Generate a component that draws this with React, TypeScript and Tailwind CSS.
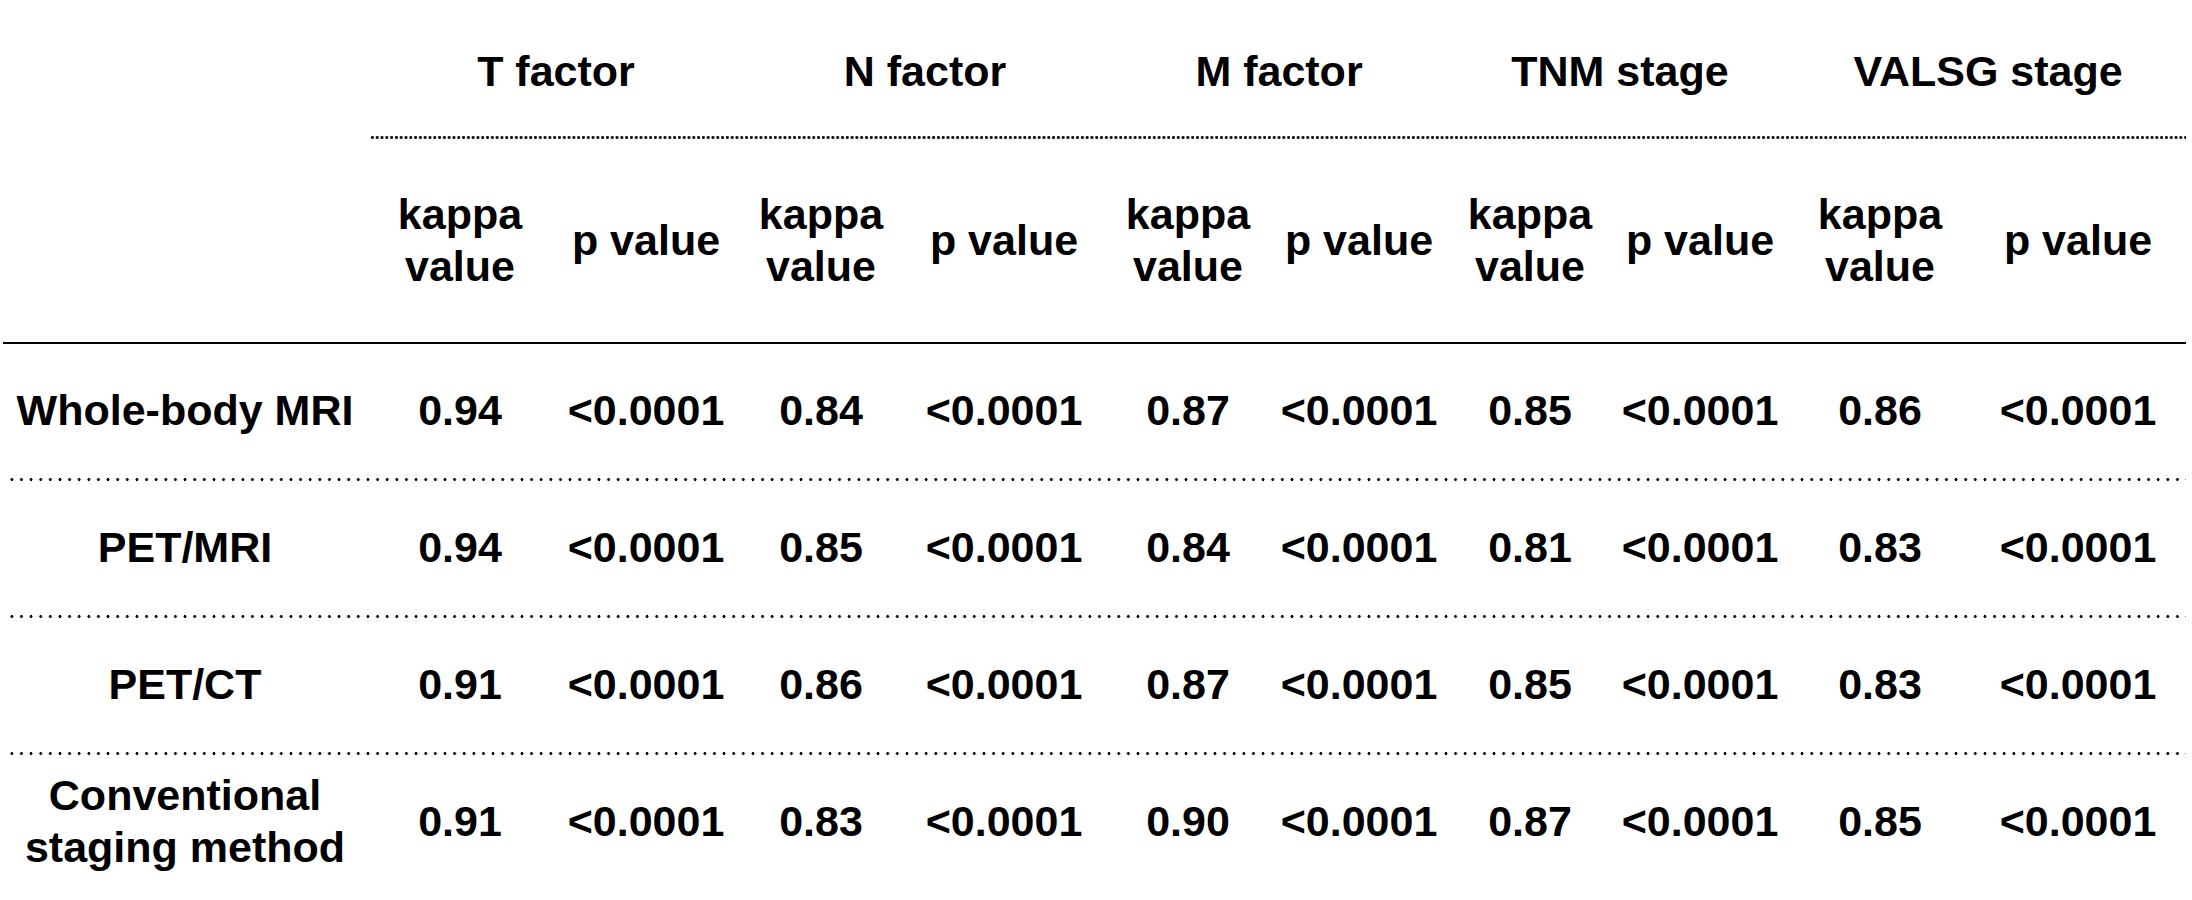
const groups = ["T factor", "N factor", "M factor", "TNM stage", "VALSG stage"]

const rows: { label: React.ReactNode; values: string[] }[] = [
  {
    label: "Whole-body MRI",
    values: ["0.94", "<0.0001", "0.84", "<0.0001", "0.87", "<0.0001", "0.85", "<0.0001", "0.86", "<0.0001"],
  },
  {
    label: "PET/MRI",
    values: ["0.94", "<0.0001", "0.85", "<0.0001", "0.84", "<0.0001", "0.81", "<0.0001", "0.83", "<0.0001"],
  },
  {
    label: "PET/CT",
    values: ["0.91", "<0.0001", "0.86", "<0.0001", "0.87", "<0.0001", "0.85", "<0.0001", "0.83", "<0.0001"],
  },
  {
    label: (
      <>
        Conventional
        <br />
        staging method
      </>
    ),
    values: ["0.91", "<0.0001", "0.83", "<0.0001", "0.90", "<0.0001", "0.87", "<0.0001", "0.85", "<0.0001"],
  },
]

const cols =
  "grid grid-cols-[370px_180px_192px_158px_208px_160px_182px_160px_180px_180px_216px]"

const SparseDots = () => (
  <div className="ml-[7px] w-[2179px] h-[3px] bg-[radial-gradient(circle,#000_1.2px,transparent_1.7px)] bg-[length:9.63px_3px] bg-repeat-x" />
)

export default function App() {
  return (
    <div className="w-[2192px] h-[900px] bg-white text-black font-['Liberation_Sans',Arial,sans-serif] font-bold text-[43px] leading-[1.2]">
      {/* group headers */}
      <div className="grid grid-cols-[370px_372px_366px_342px_340px_396px] h-[136px] pt-2">
        <div />
        {groups.map(g => (
          <div key={g} className="flex items-center justify-center">
            {g}
          </div>
        ))}
      </div>
      <div className="ml-[370px] w-[1816px] h-[3px] bg-[radial-gradient(circle,#000_1.2px,transparent_1.7px)] bg-[length:4.8px_3px] bg-repeat-x" />

      {/* sub headers */}
      <div className={`${cols} h-[203px]`}>
        <div />
        {groups.map(g => (
          <div key={g} className="contents">
            <div className="flex items-center justify-center text-center">
              kappa
              <br />
              value
            </div>
            <div className="flex items-center justify-center">p value</div>
          </div>
        ))}
      </div>
      <div className="ml-[3px] w-[2183px] h-[2px] bg-black" />

      {rows.map((row, i) => (
        <div key={i}>
          {i > 0 && <SparseDots />}
          <div className={`${cols} h-[134px]`}>
            <div className="flex items-center justify-center text-center">{row.label}</div>
            {row.values.map((v, j) => (
              <div key={j} className="flex items-center justify-center">
                {v}
              </div>
            ))}
          </div>
        </div>
      ))}
    </div>
  )
}
